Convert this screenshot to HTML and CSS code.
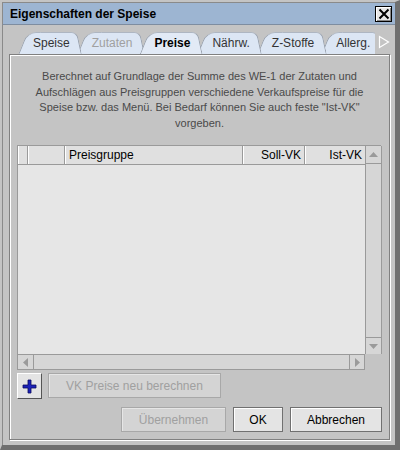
FILE: index.html
```html
<!DOCTYPE html>
<html>
<head>
<meta charset="utf-8">
<link rel="stylesheet" href="styles.css">
</head>
<body>
<div class="window">
  <div class="titlebar">
    <span class="title">Eigenschaften der Speise</span>
    <span class="close"><svg width="12" height="12" viewBox="0 0 12 12"><path d="M1.5 1.5 L10.5 10.5 M10.5 1.5 L1.5 10.5" stroke="#000" stroke-width="2"/></svg></span>
  </div>
  <div class="body">
    <div class="tabrow">
      <div class="tabs">
        <div class="tab t1"><span>Speise</span></div>
        <div class="tab t2 disabled"><span>Zutaten</span></div>
        <div class="tab t3 selected"><span>Preise</span></div>
        <div class="tab t4"><span>Nährw.</span></div>
        <div class="tab t5"><span>Z-Stoffe</span></div>
        <div class="tab t6"><span>Allerg.</span></div>
      </div>
      <div class="tabarrow"><svg width="12" height="14" viewBox="0 0 12 14"><path d="M1.5 1.5 L10.5 7 L1.5 12.5 Z" fill="none" stroke="#fff" stroke-width="1.2"/></svg></div>
    </div>
    <div class="panel">
      <p class="desc">Berechnet auf Grundlage der Summe des WE-1 der Zutaten und Aufschlägen aus Preisgruppen verschiedene Verkaufspreise für die Speise bzw. das Menü. Bei Bedarf können Sie auch feste "Ist-VK" vorgeben.</p>
      <div class="table">
        <div class="main">
          <div class="thead">
            <div class="th c1"></div>
            <div class="th c2"></div>
            <div class="th c3">Preisgruppe</div>
            <div class="th c4 right">Soll-VK</div>
            <div class="th c5 right">Ist-VK</div>
          </div>
          <div class="tbody"></div>
        </div>
        <div class="vscroll">
          <div class="sbtn"><svg width="9" height="5" viewBox="0 0 9 5"><path d="M0 5 L4.5 0 L9 5 Z" fill="#9a9a9a"/></svg></div>
          <div class="track"></div>
          <div class="sbtn bottom"><svg width="9" height="5" viewBox="0 0 9 5"><path d="M0 0 L4.5 5 L9 0 Z" fill="#9a9a9a"/></svg></div>
        </div>
        <div class="hscroll">
          <div class="hbtn"><svg width="5" height="9" viewBox="0 0 5 9"><path d="M5 0 L0 4.5 L5 9 Z" fill="#9a9a9a"/></svg></div>
          <div class="htrack"></div>
          <div class="hbtn rightb"><svg width="5" height="9" viewBox="0 0 5 9"><path d="M0 0 L5 4.5 L0 9 Z" fill="#9a9a9a"/></svg></div>
        </div>
        <div class="corner"></div>
      </div>
      <div class="actions">
        <div class="btn plus"><svg width="15" height="15" viewBox="0 0 15 15"><path d="M6 1 H9 V6 H14 V9 H9 V14 H6 V9 H1 V6 H6 Z" fill="#1c22b8" stroke="#0a0a60" stroke-width="0.8"/></svg></div>
        <div class="btn dis vk">VK Preise neu berechnen</div>
      </div>
      <div class="buttons">
        <div class="btn dis b-ueb">Übernehmen</div>
        <div class="btn b-ok">OK</div>
        <div class="btn b-abb">Abbrechen</div>
      </div>
    </div>
  </div>
</div>
</body>
</html>
```
FILE: styles.css
```css
* { box-sizing: border-box; }
html, body { margin: 0; padding: 0; }
body {
  font-family: "Liberation Sans", Arial, sans-serif;
  font-size: 12px;
  color: #000;
  background: #c4c4c4;
}
.window {
  width: 400px;
  height: 450px;
  background: #c4c4c4;
  border-left: 2px solid #c4c4c4;
  border-top: 2px solid #c4c4c4;
  border-right: 5px solid #6f6f6f;
  border-bottom: 5px solid #6f6f6f;
  box-shadow: inset 1px 1px 0 #8a8a8a;
  display: flex;
  flex-direction: column;
}
.titlebar {
  height: 23px;
  background: #9db5d2;
  border-top: 1px solid #8a8a8a;
  border-left: 1px solid #8a8a8a;
  border-bottom: 1px solid #7e8da0;
  display: flex;
  align-items: center;
  justify-content: space-between;
  padding: 0 3px 0 7px;
  flex: none;
}
.title { font-weight: bold; font-size: 12px; color: #000; }
.close {
  width: 17px;
  height: 16px;
  border: 1px solid #000;
  background: #e6e6e6;
  box-shadow: inset 1px 1px 0 #fff, inset -1px -1px 0 #888;
  display: flex;
  align-items: center;
  justify-content: center;
}
.close svg { display: block; }
.body {
  flex: 1;
  display: flex;
  flex-direction: column;
  padding: 5px 0 0 6px;
  border-left: 1px solid #8a8a8a;
}
.tabrow {
  height: 24px;
  display: flex;
  align-items: flex-end;
  flex: none;
}
.tabs {
  width: 366px;
  height: 24px;
  display: flex;
  align-items: flex-end;
  overflow: hidden;
  padding-left: 5px;
}
.tab {
  position: relative;
  height: 22px;
  display: flex;
  align-items: center;
  padding: 0 16px 0 19px;
  color: #333;
  margin-right: -13px;
  flex: none;
}
.tab::before, .tab::after {
  content: "";
  position: absolute;
  top: 0;
  bottom: -1px;
  background: #dce6f4;
  border-top: 1px solid #aeb6c2;
}
.tab::before {
  left: 4px;
  width: 60%;
  border-left: 1px solid #98a0ac;
  border-top-left-radius: 9px;
  transform: skewX(-22deg);
  transform-origin: bottom left;
}
.tab::after {
  right: 4px;
  width: 50%;
  border-right: 1px solid #98a0ac;
  border-top-right-radius: 6px;
  transform: skewX(12deg);
  transform-origin: bottom right;
}
.tab span { position: relative; z-index: 1; }
.t1 { z-index: 6; }
.t2 { z-index: 5; }
.t3 { z-index: 9; font-weight: bold; color: #000; }
.t4 { z-index: 4; }
.t5 { z-index: 3; }
.t6 { z-index: 2; }
.tab.disabled { color: #a0a0a0; }
.tab.selected::before, .tab.selected::after { background: #e2eaf6; bottom: -2px; }
.tabarrow {
  width: 18px;
  height: 24px;
  display: flex;
  align-items: center;
  justify-content: center;
}
.panel {
  width: 381px;
  height: 386px;
  border: 1px solid #808080;
  box-shadow: inset 1px 1px 0 #fff, 1px 1px 0 #fff;
  background: #c4c4c4;
  display: flex;
  flex-direction: column;
  padding: 0 7px;
  position: relative;
  z-index: 1;
}
.desc {
  margin: 14px 0 0 0;
  font-size: 11px;
  line-height: 15.5px;
  color: #4a4a4a;
  text-align: center;
  padding: 0 8px;
  height: 62px;
}
.table {
  margin-top: 14px;
  width: 364px;
  height: 225px;
  display: grid;
  grid-template-columns: 347px 17px;
  grid-template-rows: 208px 16px;
  border-top: 1px solid #9a9a9a;
  border-left: 1px solid #9a9a9a;
}
.main { display: flex; flex-direction: column; background: #e6e6e6; }
.thead { display: flex; height: 19px; border-bottom: 1px solid #9a9a9a; flex: none; }
.th {
  background: #e0e0e0;
  border-left: 1px solid #fff;
  border-right: 1px solid #9a9a9a;
  height: 18px;
  line-height: 18px;
  padding: 0 3px;
  white-space: nowrap;
  overflow: hidden;
}
.th.right { text-align: right; }
.c1 { width: 10px; }
.c2 { width: 37px; }
.c3 { width: 178px; }
.c4 { width: 62px; }
.c5 { width: 60px; border-right: none; }
.tbody { flex: 1; background: #e6e6e6; }
.vscroll {
  display: flex;
  flex-direction: column;
  background: #d6d6d6;
  border-left: 1px solid #9a9a9a;
  border-right: 1px solid #9a9a9a;
}
.sbtn {
  height: 18px;
  flex: none;
  border-bottom: 1px solid #9a9a9a;
  display: flex;
  align-items: center;
  justify-content: center;
  background: #d6d6d6;
}
.sbtn.bottom { border-bottom: none; border-top: 1px solid #9a9a9a; height: 17px; }
.track { flex: 1; }
.hscroll {
  display: flex;
  background: #d6d6d6;
  border-top: 1px solid #9a9a9a;
  border-bottom: 1px solid #9a9a9a;
}
.hbtn {
  width: 16px;
  flex: none;
  border-right: 1px solid #9a9a9a;
  display: flex;
  align-items: center;
  justify-content: center;
}
.hbtn.rightb { border-right: 1px solid #9a9a9a; border-left: 1px solid #9a9a9a; }
.htrack { flex: 1; }
.corner { background: #c4c4c4; }
.actions {
  margin-top: 3px;
  display: flex;
  gap: 6px;
  height: 26px;
}
.btn {
  height: 25px;
  display: flex;
  align-items: center;
  justify-content: center;
  background: #e4e4e4;
  border: 1px solid #707070;
  box-shadow: inset 1px 1px 0 #fff;
  font-size: 12px;
}
.btn.plus {
  width: 25px;
  height: 26px;
  border-top: 1px solid #fff;
  border-left: 1px solid #fff;
  border-right: 1px solid #555;
  border-bottom: 1px solid #555;
  box-shadow: none;
}
.btn.dis {
  color: #a0a0a0;
  background: #d4d4d4;
  border: 1px solid #a8a8a8;
  box-shadow: inset 1px 1px 0 #e6e6e6;
}
.vk { width: 173px; }
.buttons {
  margin-top: 8px;
  display: flex;
  justify-content: flex-end;
  gap: 7px;
}
.b-ueb { width: 105px; flex: none; }
.b-ok { width: 50px; flex: none; }
.b-abb { width: 92px; flex: none; }
```
